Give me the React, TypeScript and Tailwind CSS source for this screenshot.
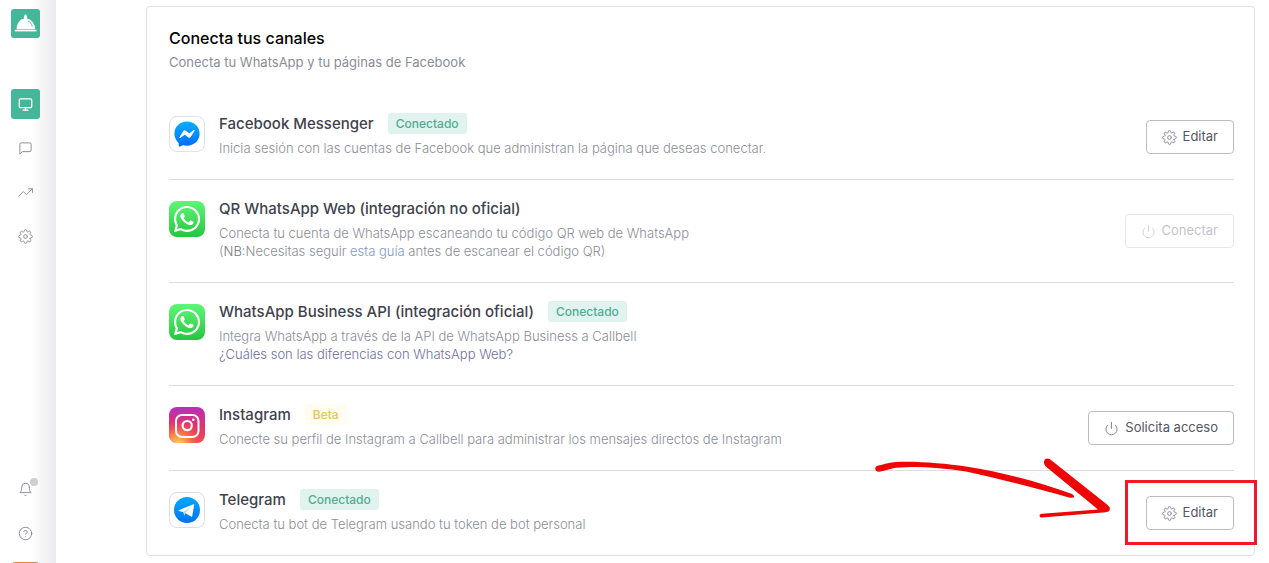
import type { ReactNode } from "react";
import {
  FiBell,
  FiHelpCircle,
  FiMessageSquare,
  FiMonitor,
  FiPower,
  FiSettings,
  FiTrendingUp,
} from "react-icons/fi";
import { FaFacebookMessenger, FaWhatsapp } from "react-icons/fa6";

type Channel = {
  name: string;
  icon: ReactNode;
  description: ReactNode;
  badge?: "Conectado" | "Beta";
  action?: "Editar" | "Conectar" | "Solicita acceso";
  disabled?: boolean;
  highlighted?: boolean;
};

function MessengerLogo() {
  return (
    <div className="flex size-9 items-center justify-center rounded-lg border border-[#dfe1ea] bg-white">
      <svg width="0" height="0" className="absolute">
        <linearGradient id="messenger" x1="0" y1="0" x2="0" y2="1">
          <stop offset="0" stopColor="#00b2ff" />
          <stop offset="1" stopColor="#006aff" />
        </linearGradient>
      </svg>
      <FaFacebookMessenger size={26} fill="url(#messenger)" />
    </div>
  );
}

function WhatsappLogo() {
  return (
    <div className="flex size-9 items-center justify-center rounded-lg bg-linear-to-b from-[#5df777] to-[#24c63f] text-white">
      <FaWhatsapp size={30} />
    </div>
  );
}

function InstagramLogo() {
  return (
    <svg width="36" height="36" viewBox="0 0 36 36" fill="none">
      <defs>
        <linearGradient id="ig-base" x1="0" y1="0" x2="0" y2="1">
          <stop offset="0" stopColor="#b52fb8" />
          <stop offset="0.5" stopColor="#e0336f" />
          <stop offset="1" stopColor="#f2494e" />
        </linearGradient>
        <radialGradient id="ig-glow" cx="0.25" cy="1.05" r="0.7">
          <stop offset="0" stopColor="#ffd95c" />
          <stop offset="0.4" stopColor="#fb8a45" />
          <stop offset="1" stopColor="#f2494e" stopOpacity="0" />
        </radialGradient>
      </defs>
      <rect width="36" height="36" rx="8" fill="url(#ig-base)" />
      <rect width="36" height="36" rx="8" fill="url(#ig-glow)" />
      <rect x="7" y="8" width="22.5" height="22" rx="6" stroke="#fff" strokeWidth="2" />
      <circle cx="18.2" cy="18.6" r="4.6" stroke="#fff" strokeWidth="2.2" />
      <circle cx="24.3" cy="12.8" r="1.3" fill="#fff" />
    </svg>
  );
}

function TelegramLogo() {
  return (
    <div className="flex size-9 items-center justify-center rounded-lg border border-[#dcdde1] bg-white">
      <svg width="26" height="26" viewBox="0 0 26 26">
        <defs>
          <linearGradient id="telegram" x1="0" y1="0" x2="0" y2="1">
            <stop offset="0" stopColor="#00aaff" />
            <stop offset="1" stopColor="#0072f5" />
          </linearGradient>
        </defs>
        <circle cx="13" cy="13" r="13" fill="url(#telegram)" />
        <path d="M4.8 13.2 19.4 7.2c.6-.2.9.1.8.8l-2 11.2c-.1.6-.6.8-1.1.4L9 15.1l-4.1-1.2c-.5-.2-.5-.5-.1-.7Z" fill="#fff" />
        <path d="m9 15.1 8.6-5.6-6.6 6.6-.4 3.2Z" fill="#b4dbfb" />
      </svg>
    </div>
  );
}

function BellLogo() {
  return (
    <svg width="29" height="29" viewBox="0 0 29 29" fill="none">
      <rect width="29" height="29" rx="3" fill="#45b698" />
      <path d="M5.6 20.2c0-5.6 3.4-10 7.6-10.6a1.9 1.9 0 0 1-.1-2.2c.2-1.5.8-2 1.4-2s1.2.5 1.4 2c.4.8.4 1.6-.1 2.2 4.2.6 8.4 5 8.4 10.6Z" fill="#fff" />
      <path d="M16.8 12c2.4 1 4 2.8 4.5 5.4" stroke="#45b698" strokeWidth="0.9" />
      <path d="M3.8 20.8h21.6v1.6H3.8Z" fill="#fff" />
    </svg>
  );
}

const channels: Channel[] = [
  {
    name: "Facebook Messenger",
    icon: <MessengerLogo />,
    description:
      "Inicia sesión con las cuentas de Facebook que administran la página que deseas conectar.",
    badge: "Conectado",
    action: "Editar",
  },
  {
    name: "QR WhatsApp Web (integración no oficial)",
    icon: <WhatsappLogo />,
    description: (
      <>
        Conecta tu cuenta de WhatsApp escaneando tu código QR web de WhatsApp
        <br />
        (<span className="text-[#74767f]">NB:</span>Necesitas seguir{" "}
        <a href="#" className="text-[#8297cb]">
          esta guía
        </a>{" "}
        antes de escanear el código QR)
      </>
    ),
    action: "Conectar",
    disabled: true,
  },
  {
    name: "WhatsApp Business API (integración oficial)",
    icon: <WhatsappLogo />,
    description: (
      <>
        Integra WhatsApp a través de la API de WhatsApp Business a Callbell
        <br />
        <a href="#" className="text-[#706fa3]">
          ¿Cuáles son las diferencias con WhatsApp Web?
        </a>
      </>
    ),
    badge: "Conectado",
  },
  {
    name: "Instagram",
    icon: <InstagramLogo />,
    description:
      "Conecte su perfil de Instagram a Callbell para administrar los mensajes directos de Instagram",
    badge: "Beta",
    action: "Solicita acceso",
  },
  {
    name: "Telegram",
    icon: <TelegramLogo />,
    description: "Conecta tu bot de Telegram usando tu token de bot personal",
    badge: "Conectado",
    action: "Editar",
    highlighted: true,
  },
];

const navItems = [
  { label: "Conversaciones", icon: FiMessageSquare },
  { label: "Estadísticas", icon: FiTrendingUp },
  { label: "Configuración", icon: FiSettings },
];

function Sidebar() {
  return (
    <aside className="sticky top-0 flex h-screen w-14 shrink-0 flex-col items-center overflow-hidden bg-linear-to-r from-white from-55% to-[#ebebee] pt-[9px] pr-[5px] text-[#8e9098]">
      <BellLogo />
      <nav className="mt-[51px] flex flex-col items-center gap-[14px]">
        <a
          href="#"
          aria-label="Panel"
          className="flex h-[30px] w-[29px] items-center justify-center rounded-[3px] bg-[#45b698] text-white"
        >
          <FiMonitor size={15} strokeWidth={2} />
        </a>
        {navItems.map(({ label, icon: Icon }) => (
          <a
            key={label}
            href="#"
            aria-label={label}
            className="flex h-[30px] w-[29px] items-center justify-center"
          >
            <Icon size={15} strokeWidth={1.6} />
          </a>
        ))}
      </nav>
      <div className="mt-auto -mb-7 flex flex-col items-center gap-[14px]">
        <button
          aria-label="Notificaciones"
          className="relative flex h-[30px] w-[29px] items-center justify-center"
        >
          <FiBell size={15} strokeWidth={1.6} />
          <span className="absolute top-1 right-[2px] size-2 rounded-full bg-[#cdced1]" />
        </button>
        <button aria-label="Ayuda" className="flex h-[30px] w-[29px] items-center justify-center">
          <FiHelpCircle size={15} strokeWidth={1.6} />
        </button>
        <div className="h-[29px] w-[27px] rounded-[3px] bg-[#e08a3c]" />
      </div>
    </aside>
  );
}

function Badge({ label }: { label: "Conectado" | "Beta" }) {
  return (
    <span
      className={`rounded-[3px] px-2 text-xs leading-[21px] font-medium ${
        label === "Beta" ? "bg-[#fffdf0] text-[#e8c45c]" : "bg-[#e0f3ee] text-[#50ad92]"
      }`}
    >
      {label}
    </span>
  );
}

// Hand-drawn arrow and frame pointing at the button they wrap
function Highlight() {
  return (
    <>
      <div className="pointer-events-none absolute -top-4 -right-[23px] -bottom-[15px] -left-[21px] border-3 border-[#ed1c24]" />
      <svg
        width="240"
        height="64"
        viewBox="873 456 240 64"
        fill="#ee0505"
        className="pointer-events-none absolute -top-10 right-[calc(100%+33px)] max-w-none"
      >
        <path d="M877.5 465.8C883 464.5 890 462.2 896 462C917 461 945 463.5 966 466.5C1004 472.5 1039 482 1072 494C1076 496.5 1074 498.5 1069 497.5C1036 488.5 1003 479.5 966 471.5C940 467.5 917 466 896 467.7C889 468.8 884 471 879 471.8C874.5 471.8 874 467.3 877.5 465.8Z" />
        <path d="M1050 459.3 1107 504.5C1111.5 508 1110.5 512 1106 512.2L1042 517.5C1039 517.4 1038.5 514.3 1042 513.7L1098 509.5 1045.5 466.3C1041.5 460.5 1046 456.5 1050 459.3Z" />
      </svg>
    </>
  );
}

function ActionButton({ action, disabled }: { action: string; disabled?: boolean }) {
  const Icon = action === "Editar" ? FiSettings : FiPower;

  return (
    <button
      disabled={disabled}
      className="flex h-[34px] items-center gap-[6px] rounded border border-[#bbbcc2] bg-white px-[15px] text-[13px] text-[#55565f] disabled:opacity-35"
    >
      <Icon size={15} strokeWidth={1.6} className="text-[#8b8d95]" />
      {action}
    </button>
  );
}

function ChannelRow({ channel }: { channel: Channel }) {
  return (
    <li className="flex items-center justify-between border-b border-[#dcdde0] py-[18px] first:pt-[11px] last:border-b-0">
      <div className="flex gap-[14px] pb-1">
        <div className="mt-[3px] shrink-0">{channel.icon}</div>
        <div>
          <div className="flex items-start gap-[14px]">
            <h2 className="text-[15px] leading-[22px] font-medium text-[#40424d]">
              {channel.name}
            </h2>
            {channel.badge && <Badge label={channel.badge} />}
          </div>
          <p className="mt-1 text-[13px] leading-[18px] font-light text-[#8b8d97]">
            {channel.description}
          </p>
        </div>
      </div>
      {channel.action && (
        <div className="relative shrink-0">
          <ActionButton action={channel.action} disabled={channel.disabled} />
          {channel.highlighted && <Highlight />}
        </div>
      )}
    </li>
  );
}

export default function App() {
  return (
    <div className="flex min-h-screen bg-white font-[Inter,sans-serif]">
      <Sidebar />
      <main className="flex-1 pt-[6px] pr-[14px] pb-[7px] pl-[90px]">
        <section className="rounded border border-[#dfe0e3] pt-[19px] pr-5 pl-[22px]">
          <h1 className="text-base leading-6 font-medium text-black">Conecta tus canales</h1>
          <p className="mt-[3px] text-[13px] leading-[18px] text-[#8b8d97]">
            Conecta tu WhatsApp y tu páginas de Facebook
          </p>
          <ul className="mt-[31px]">
            {channels.map((channel) => (
              <ChannelRow key={channel.name} channel={channel} />
            ))}
          </ul>
        </section>
      </main>
    </div>
  );
}
